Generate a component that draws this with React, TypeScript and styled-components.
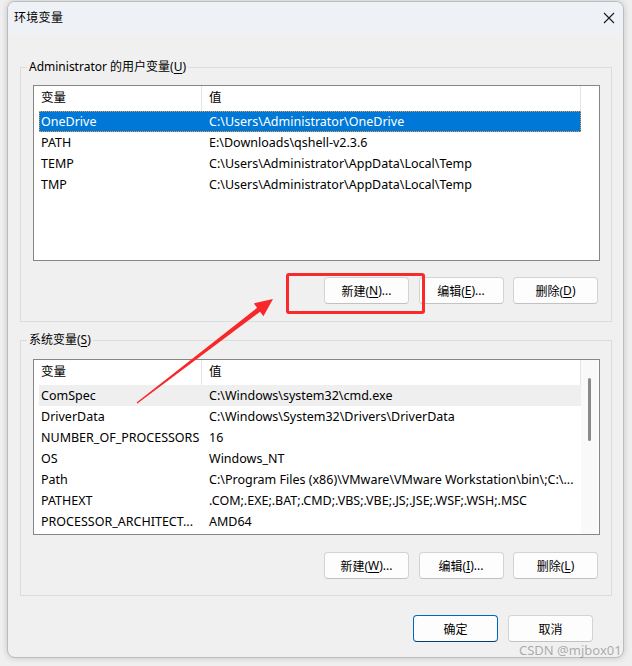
import React from "react";
import styled, { createGlobalStyle } from "styled-components";

const Global = createGlobalStyle`
  html, body { margin: 0; padding: 0; }
  body {
    background: #efefef;
    font-family: "Noto Sans", "Noto Sans CJK SC", sans-serif;
    font-size: 12px;
    color: #000;
  }
`;

const Page = styled.div`
  position: relative;
  width: 632px;
  height: 666px;
  overflow: hidden;
  padding-top: 1px;
  box-sizing: border-box;
`;

const Window = styled.div`
  margin-left: 7px;
  width: 617px;
  height: 657px;
  box-sizing: border-box;
  border: 1px solid #bcbcbc;
  border-radius: 8px;
  overflow: hidden;
  background: #f0f0f0;
  box-shadow: 0 0 6px rgba(0, 0, 0, 0.18);
  display: flex;
  flex-direction: column;
`;

const TitleBar = styled.div`
  height: 30px;
  flex: none;
  background: #eef2f6;
  display: flex;
  align-items: center;
  justify-content: space-between;
  padding: 0 8px 2px 6px;
`;

const Title = styled.span`
  font-size: 12px;
  letter-spacing: 0.3px;
`;

const CloseButton = styled.span`
  width: 12px;
  height: 12px;
  display: flex;
  margin-top: 1px;
`;

const Body = styled.div`
  display: flex;
  flex-direction: column;
  padding: 0 11px 0 12px;
`;

const GroupBox = styled.fieldset<{ $top: number; $pt: number; $pb: number }>`
  margin: ${(p) => p.$top}px 0 0 0;
  padding: ${(p) => p.$pt}px 11px ${(p) => p.$pb}px 12px;
  border: 1px solid #dcdcdc;
  min-width: 0;
  display: flex;
  flex-direction: column;
`;

const GroupLegend = styled.legend`
  margin-left: -6px;
  padding: 0 2px;
  line-height: 18px;
  height: 18px;
  font-size: 12px;
`;

const ListView = styled.div`
  height: 176px;
  box-sizing: border-box;
  border: 1px solid #868686;
  background: #fff;
  display: flex;
  overflow: hidden;
  font-size: 12.5px;
`;

const ListContent = styled.div`
  width: 547px;
  display: flex;
  flex-direction: column;
`;

const HeaderRow = styled.div`
  display: flex;
  height: 25px;
  flex: none;
`;

const HeaderCell = styled.div<{ $w: number }>`
  width: ${(p) => p.$w}px;
  box-sizing: border-box;
  padding-left: 7px;
  border-right: 1px solid #e5e5e5;
  line-height: 24px;
  white-space: nowrap;
`;

const Rows = styled.div`
  padding-left: 5px;
  display: flex;
  flex-direction: column;
`;

const Row = styled.div<{ $selected?: boolean; $hover?: boolean }>`
  display: flex;
  height: 21px;
  box-sizing: border-box;
  align-items: center;
  background: ${(p) => (p.$selected ? "#0078d7" : p.$hover ? "#efefef" : "transparent")};
  color: ${(p) => (p.$selected ? "#fff" : "#000")};
  outline: ${(p) => (p.$selected ? "1px dotted #f39b2c" : "none")};
  outline-offset: -1px;
`;

const Cell = styled.div<{ $w: number }>`
  width: ${(p) => p.$w}px;
  box-sizing: border-box;
  padding-left: 2px;
  white-space: nowrap;
  overflow: hidden;
`;

const ScrollBar = styled.div`
  width: 17px;
  flex: none;
  background: #f9f9f9;
  display: flex;
  justify-content: center;
  padding-top: 18px;
`;

const Thumb = styled.div`
  width: 3px;
  height: 63px;
  border-radius: 2px;
  background: #8a8a8a;
`;

const ButtonRow = styled.div<{ $mt: number; $gap: number; $pr: number }>`
  display: flex;
  justify-content: flex-end;
  gap: ${(p) => p.$gap}px;
  margin-top: ${(p) => p.$mt}px;
  padding-right: ${(p) => p.$pr}px;
`;

const Button = styled.button<{ $primary?: boolean }>`
  width: 85px;
  height: 27px;
  box-sizing: border-box;
  border-radius: 4px;
  border: 1px solid ${(p) => (p.$primary ? "#0067c0" : "#d3d3d3")};
  border-bottom-color: ${(p) => (p.$primary ? "#003e73" : "#c2c2c2")};
  background: #fdfdfd;
  font-family: "Noto Sans", "Noto Sans CJK SC", sans-serif;
  font-size: 12px;
  color: #000;
  padding: 0;
  display: flex;
  align-items: center;
  justify-content: center;
`;

const Mn = styled.u`
  text-underline-offset: 2px;
`;

const Highlight = styled.div`
  position: absolute;
  left: 286px;
  top: 273px;
  width: 139px;
  height: 41px;
  box-sizing: border-box;
  border: 3px solid #fa2a2a;
  border-radius: 3px;
  pointer-events: none;
`;

const ArrowLayer = styled.svg`
  position: absolute;
  left: 0;
  top: 0;
  pointer-events: none;
`;

const Watermark = styled.div`
  position: absolute;
  left: 519px;
  top: 641px;
  font-size: 13px;
  color: rgba(110, 110, 110, 0.55);
  white-space: nowrap;
`;

type Item = { name: string; value: string; selected?: boolean; hover?: boolean };

const userVars: Item[] = [
  { name: "OneDrive", value: "C:\\Users\\Administrator\\OneDrive", selected: true },
  { name: "PATH", value: "E:\\Downloads\\qshell-v2.3.6" },
  { name: "TEMP", value: "C:\\Users\\Administrator\\AppData\\Local\\Temp" },
  { name: "TMP", value: "C:\\Users\\Administrator\\AppData\\Local\\Temp" },
];

const sysVars: Item[] = [
  { name: "ComSpec", value: "C:\\Windows\\system32\\cmd.exe", hover: true },
  { name: "DriverData", value: "C:\\Windows\\System32\\Drivers\\DriverData" },
  { name: "NUMBER_OF_PROCESSORS", value: "16" },
  { name: "OS", value: "Windows_NT" },
  { name: "Path", value: "C:\\Program Files (x86)\\VMware\\VMware Workstation\\bin\\;C:\\..." },
  { name: "PATHEXT", value: ".COM;.EXE;.BAT;.CMD;.VBS;.VBE;.JS;.JSE;.WSF;.WSH;.MSC" },
  { name: "PROCESSOR_ARCHITECT...", value: "AMD64" },
];

function List({ items, scroll }: { items: Item[]; scroll?: boolean }) {
  return (
    <ListView>
      <ListContent>
        <HeaderRow>
          <HeaderCell $w={168}>变量</HeaderCell>
          <HeaderCell $w={379}>值</HeaderCell>
        </HeaderRow>
        <Rows>
          {items.map((it) => (
            <Row key={it.name} $selected={it.selected} $hover={it.hover}>
              <Cell $w={168}>{it.name}</Cell>
              <Cell $w={374}>{it.value}</Cell>
            </Row>
          ))}
        </Rows>
      </ListContent>
      {scroll && (
        <ScrollBar>
          <Thumb />
        </ScrollBar>
      )}
    </ListView>
  );
}

export default function App() {
  return (
    <Page>
      <Global />
      <Window>
        <TitleBar>
          <Title>环境变量</Title>
          <CloseButton>
            <svg width="12" height="12" viewBox="0 0 12 12">
              <path d="M1 1 L11 11 M11 1 L1 11" stroke="#1a1a1a" strokeWidth="1.1" fill="none" />
            </svg>
          </CloseButton>
        </TitleBar>
        <Body>
          <GroupBox $top={24} $pt={9} $pb={17}>
            <GroupLegend>
              Administrator 的用户变量(<Mn>U</Mn>)
            </GroupLegend>
            <List items={userVars} />
            <ButtonRow $mt={16} $gap={9.5} $pr={2}>
              <Button>新建(<Mn>N</Mn>)...</Button>
              <Button>编辑(<Mn>E</Mn>)...</Button>
              <Button>删除(<Mn>D</Mn>)</Button>
            </ButtonRow>
          </GroupBox>
          <GroupBox $top={9} $pt={10} $pb={16}>
            <GroupLegend>
              系统变量(<Mn>S</Mn>)
            </GroupLegend>
            <List items={sysVars} scroll />
            <ButtonRow $mt={17} $gap={9.5} $pr={2}>
              <Button>新建(<Mn>W</Mn>)...</Button>
              <Button>编辑(<Mn>I</Mn>)...</Button>
              <Button>删除(<Mn>L</Mn>)</Button>
            </ButtonRow>
          </GroupBox>
          <ButtonRow $mt={19} $gap={10} $pr={19}>
            <Button $primary>确定</Button>
            <Button>取消</Button>
          </ButtonRow>
        </Body>
      </Window>
      <Highlight />
      <ArrowLayer width="632" height="666" viewBox="0 0 632 666">
        <polygon
          points="136.6,402.4 257.1,307.8 253.8,303.4 273,299 263.4,316.2 260.1,311.8 137.4,403.6"
          fill="#f8282a"
        />
      </ArrowLayer>
      <Watermark>CSDN @mjbox01</Watermark>
    </Page>
  );
}
